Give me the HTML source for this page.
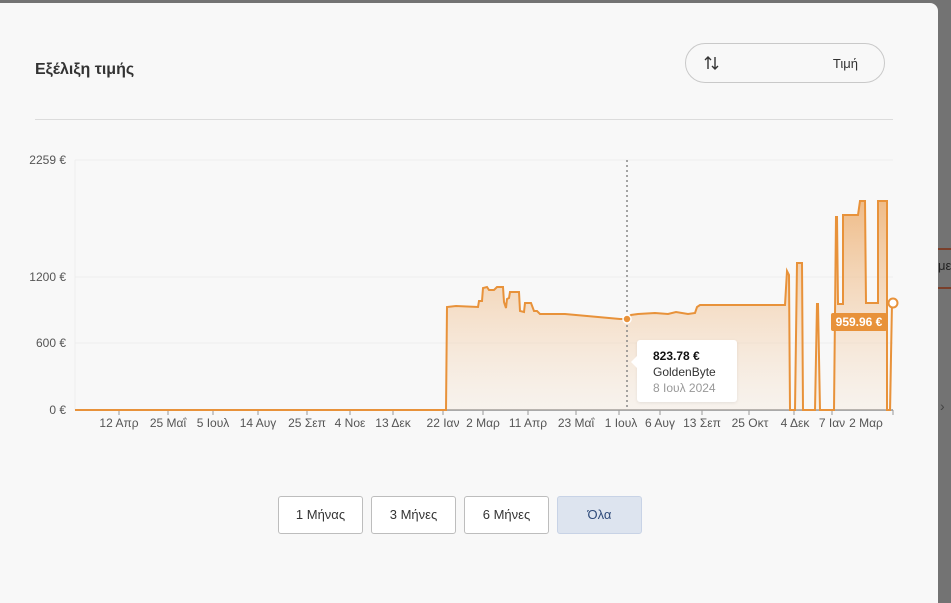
<!DOCTYPE html>
<html><head><meta charset="utf-8"><style>
*{margin:0;padding:0;box-sizing:border-box}
body{width:951px;height:595px;overflow:hidden;background:#737373;font-family:"Liberation Sans",sans-serif;position:relative}
.modal{position:absolute;left:0;top:3px;width:938px;height:600px;background:#f8f8f8;border-radius:0 8px 0 0}
.title{position:absolute;left:35px;top:58px;font-size:16px;font-weight:bold;color:#333}
.sel{position:absolute;left:685px;top:40px;width:200px;height:40px;border:1px solid #c9c9c9;border-radius:20px;font-size:13px;color:#333}
.sel .t{position:absolute;right:26px;top:12px}
.sel svg{position:absolute;left:17px;top:11px}
.div{position:absolute;left:35px;top:116px;width:858px;height:1px;background:#dcdcdc}
.yl{position:absolute;width:66px;text-align:right;font-size:12px;color:#555;left:0}
.xl{position:absolute;top:416px;font-size:12px;color:#555;transform:translateX(-50%);white-space:nowrap}
.btn{position:absolute;top:496px;width:85px;height:38px;border:1px solid #bdbdbd;border-radius:3px;background:#fff;font-size:13px;color:#333;text-align:center;line-height:36px}
.tip{position:absolute;left:637px;top:340px;width:100px;height:62px;background:#fff;border-radius:3px;box-shadow:0 1px 3px rgba(0,0,0,.08);font-size:12px;padding:8px 0 0 16px;line-height:16px;color:#333}
.tip:before{content:"";position:absolute;left:-6px;top:16px;border:6px solid transparent;border-left:0;border-right-color:#fff}
.tag{position:absolute;left:831px;top:313px;width:56px;height:18px;background:#e8923a;color:#fff;font-size:12px;font-weight:bold;text-align:center;line-height:18px;border-radius:2px}
.side{position:absolute;left:938px;}
</style></head><body>
<div class="side" style="top:248px;width:13px;height:2px;background:#7a3f2a"></div>
<div class="side" style="top:287px;width:13px;height:2px;background:#7a3f2a"></div>
<div class="side" style="top:258px;font-size:13px;color:#222">με</div>
<div class="side" style="top:398px;left:940px;font-size:14px;color:#444">›</div>
<div class="modal">
<div class="title">Εξέλιξη τιμής</div>
<div class="sel"><svg width="18" height="16" viewBox="0 0 18 16"><path d="M5 14V2M2 5l3-3 3 3M12 2v12M9 11l3 3 3-3" stroke="#333" stroke-width="1.4" fill="none"/></svg><span class="t">Τιμή</span></div>
<div class="div"></div>
</div>
<div class="yl" style="top:153px">2259 €</div>
<div class="yl" style="top:270px">1200 €</div>
<div class="yl" style="top:336px">600 €</div>
<div class="yl" style="top:403px">0 €</div>
<svg style="position:absolute;left:0;top:0" width="951" height="595">
<defs><linearGradient id="g" gradientUnits="userSpaceOnUse" x1="0" y1="200" x2="0" y2="410"><stop offset="0" stop-color="#eeb47a" stop-opacity=".9"/><stop offset="1" stop-color="#f5dcc2" stop-opacity=".2"/></linearGradient></defs>
<line x1="75" y1="160" x2="893" y2="160" stroke="#eeeeee"/>
<line x1="75" y1="277" x2="893" y2="277" stroke="#eeeeee"/>
<line x1="75" y1="343" x2="893" y2="343" stroke="#eeeeee"/>
<line x1="75" y1="160" x2="75" y2="410" stroke="#eeeeee"/>
<line x1="75" y1="410" x2="893" y2="410" stroke="#aaa" stroke-width="2"/>
<g stroke="#999" stroke-width="1">
<line x1="119" y1="410" x2="119" y2="415"/><line x1="168" y1="410" x2="168" y2="415"/><line x1="213" y1="410" x2="213" y2="415"/><line x1="258" y1="410" x2="258" y2="415"/><line x1="307" y1="410" x2="307" y2="415"/><line x1="350" y1="410" x2="350" y2="415"/><line x1="393" y1="410" x2="393" y2="415"/><line x1="443" y1="410" x2="443" y2="415"/><line x1="483" y1="410" x2="483" y2="415"/><line x1="528" y1="410" x2="528" y2="415"/><line x1="576" y1="410" x2="576" y2="415"/><line x1="619" y1="410" x2="619" y2="415"/><line x1="660" y1="410" x2="660" y2="415"/><line x1="702" y1="410" x2="702" y2="415"/><line x1="749" y1="410" x2="749" y2="415"/><line x1="794" y1="410" x2="794" y2="415"/><line x1="832" y1="410" x2="832" y2="415"/><line x1="893" y1="410" x2="893" y2="415"/>
</g>
<path d="M447 410L447 307L456 306L478 307L479 301L482 301L483 288L487 287L489 290L494 290L497 287L503 287L504 302L506 308L507 299L509 298L510 292L519 292L520 311L524 312L525 303L531 303L534 311L537 311L540 314L544 314L565 314L620 319L627 319L631 315L638 314L655 313L668 314L676 312L688 314L695 313L697 307L700 305L710 305L785 305L787 271L789 275L790 410L795 410L797 263L802 263L803 410L815 410L817 304L818 304L820 410L834 410L836 217L837 217L838 304L843 304L843 215L858 215L860 201L865 201L866 303L878 303L878 201L887 201L887 410L890 410L892 303L892 410Z" fill="url(#g)"/>
<path d="M75 410L446 410L447 307L456 306L478 307L479 301L482 301L483 288L487 287L489 290L494 290L497 287L503 287L504 302L506 308L507 299L509 298L510 292L519 292L520 311L524 312L525 303L531 303L534 311L537 311L540 314L544 314L565 314L620 319L627 319L631 315L638 314L655 313L668 314L676 312L688 314L695 313L697 307L700 305L710 305L785 305L787 271L789 275L790 410L795 410L797 263L802 263L803 410L815 410L817 304L818 304L820 410L834 410L836 217L837 217L838 304L843 304L843 215L858 215L860 201L865 201L866 303L878 303L878 201L887 201L887 410L890 410L892 303" fill="none" stroke="#e8923a" stroke-width="2"/>
<line x1="627" y1="160" x2="627" y2="410" stroke="#888" stroke-width="1.5" stroke-dasharray="2,3"/>
<circle cx="627" cy="319" r="4" fill="#e8923a" stroke="#fff" stroke-width="1.5"/>
<circle cx="893" cy="303" r="4.5" fill="#fff" stroke="#e8923a" stroke-width="2"/>
</svg>
<div class="xl" style="left:119px">12 Απρ</div><div class="xl" style="left:168px">25 Μαΐ</div><div class="xl" style="left:213px">5 Ιουλ</div><div class="xl" style="left:258px">14 Αυγ</div><div class="xl" style="left:307px">25 Σεπ</div><div class="xl" style="left:350px">4 Νοε</div><div class="xl" style="left:393px">13 Δεκ</div><div class="xl" style="left:443px">22 Ιαν</div><div class="xl" style="left:483px">2 Μαρ</div><div class="xl" style="left:528px">11 Απρ</div><div class="xl" style="left:576px">23 Μαΐ</div><div class="xl" style="left:621px">1 Ιουλ</div><div class="xl" style="left:660px">6 Αυγ</div><div class="xl" style="left:702px">13 Σεπ</div><div class="xl" style="left:750px">25 Οκτ</div><div class="xl" style="left:795px">4 Δεκ</div><div class="xl" style="left:832px">7 Ιαν</div><div class="xl" style="left:866px">2 Μαρ</div>
<div class="tip"><b style="color:#111">823.78 €</b><br>GoldenByte<br><span style="color:#999">8 Ιουλ 2024</span></div>
<div class="tag">959.96 €</div>
<div class="btn" style="left:278px">1 Μήνας</div>
<div class="btn" style="left:371px">3 Μήνες</div>
<div class="btn" style="left:464px">6 Μήνες</div>
<div class="btn" style="left:557px;background:#dde4ef;border-color:#c8d3e6;color:#2e4a7a">Όλα</div>
</body></html>
